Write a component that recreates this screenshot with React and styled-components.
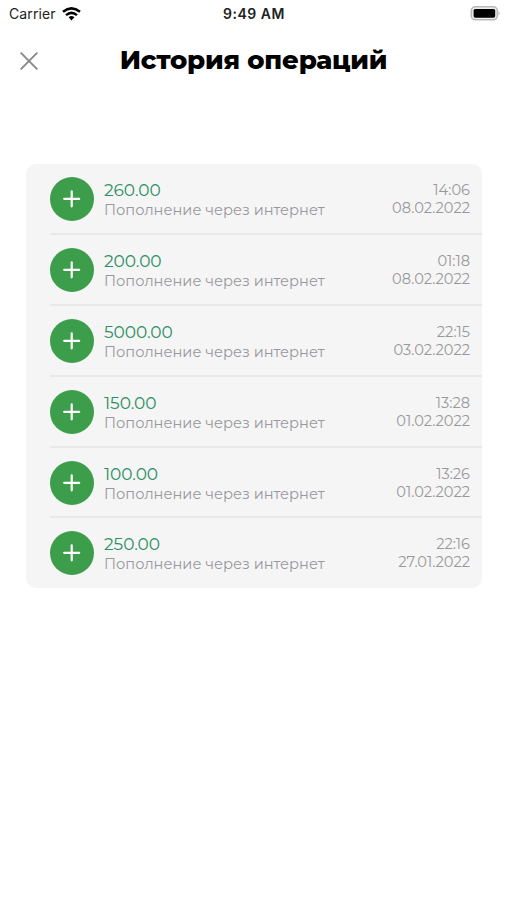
import React from "react";
import styled, { createGlobalStyle } from "styled-components";

const GlobalStyle = createGlobalStyle`
  * { box-sizing: border-box; }
  body { margin: 0; background: #fff; }
`;

const Screen = styled.main`
  width: 507px;
  height: 900px;
  overflow: hidden;
  background: #fff;
  font-family: Montserrat, Inter, sans-serif;
`;

const StatusBar = styled.div`
  display: grid;
  grid-template-columns: 1fr auto 1fr;
  align-items: center;
  height: 27px;
  padding: 0 7px 0 9px;
  color: #222;
  font-family: Inter, sans-serif;
`;

const Carrier = styled.div`
  display: flex;
  align-items: center;
  gap: 6px;
  font-size: 14px;
  line-height: 18px;
  letter-spacing: 0.1px;
`;

const Clock = styled.div`
  font-size: 14px;
  line-height: 18px;
  font-weight: 600;
  letter-spacing: 0.5px;
  margin-right: 1px;
`;

const BatteryIcon = styled.svg`
  justify-self: end;
`;

const Header = styled.header`
  display: grid;
  grid-template-columns: 58px 1fr 58px;
  align-items: center;
  height: 67px;
`;

const CloseButton = styled.button`
  display: flex;
  justify-content: center;
  padding: 0;
  border: 0;
  background: none;
`;

const Title = styled.h1`
  margin: 0 0 1px;
  text-align: center;
  font-size: 26px;
  line-height: 32px;
  font-weight: 800;
  letter-spacing: -0.2px;
  white-space: nowrap;
  color: #000;
`;

const Card = styled.ul`
  list-style: none;
  margin: 70px 25px 0 26px;
  padding: 0 0 0 24px;
  height: 424px;
  border-radius: 10px;
  background: #f5f5f5;
`;

const Row = styled.li`
  display: flex;
  height: 70.9px;
  padding: 13px 12px 0 0;
  border-bottom: 2px solid #e8e9eb;
  &:last-child { border-bottom: 0; height: 69.5px; }
`;

const Badge = styled.div`
  flex: none;
  width: 44px;
  height: 44px;
  border-radius: 50%;
  background: #3c9d4b;
`;

const Details = styled.div`
  flex: 1;
  padding: 3px 0 0 10px;
  white-space: nowrap;
`;

const Amount = styled.div`
  font-size: 17px;
  line-height: 20px;
  letter-spacing: -0.05px;
  color: #2c8f62;
`;

const Description = styled.div`
  font-size: 14.6px;
  line-height: 20px;
  color: #98989d;
`;

const Stamp = styled.div`
  padding-top: 4px;
  text-align: right;
  font-size: 14.6px;
  line-height: 18px;
  color: #98989b;
`;

const StampLine = styled.div`
  white-space: nowrap;
`;

const operations = [
  { amount: "260.00", time: "14:06", date: "08.02.2022" },
  { amount: "200.00", time: "01:18", date: "08.02.2022" },
  { amount: "5000.00", time: "22:15", date: "03.02.2022" },
  { amount: "150.00", time: "13:28", date: "01.02.2022" },
  { amount: "100.00", time: "13:26", date: "01.02.2022" },
  { amount: "250.00", time: "22:16", date: "27.01.2022" },
];

function Operation({ amount, time, date }) {
  return (
    <Row>
      <Badge>
        <svg width="44" height="44" viewBox="0 0 44 44" fill="none" stroke="#fff" strokeWidth="2.2" strokeLinecap="round">
          <path d="M14.2 21.8H29.2M21.7 14.3V29.3" />
        </svg>
      </Badge>
      <Details>
        <Amount>{amount}</Amount>
        <Description>Пополнение через интернет</Description>
      </Details>
      <Stamp>
        <StampLine>{time}</StampLine>
        <StampLine>{date}</StampLine>
      </Stamp>
    </Row>
  );
}

export default function App() {
  return (
    <Screen>
      <GlobalStyle />
      <StatusBar>
        <Carrier>
          <span>Carrier</span>
          <svg width="19" height="14" viewBox="0 0 19 14" fill="none" stroke="#000" strokeWidth="2.5">
            <path d="M1 4.8Q9.5 -2 18 4.8" />
            <path d="M4 8.1Q9.5 3.6 15 8.1" />
            <path d="M6.6 10.2Q9.5 8 12.4 10.2L9.5 13.4Z" fill="#000" stroke="none" />
          </svg>
        </Carrier>
        <Clock>9:49 AM</Clock>
        <BatteryIcon width="30" height="15" viewBox="0 0 30 15">
          <rect x="1.3" y="0.8" width="26" height="13" rx="4" fill="#eee" stroke="#b9b9b9" strokeWidth="1.6" />
          <rect x="3.6" y="2.9" width="21.6" height="8.8" rx="1.6" fill="#000" />
          <path d="M28.6 5.2Q30.6 7.3 28.6 9.4Z" fill="#aaa" />
        </BatteryIcon>
      </StatusBar>
      <Header>
        <CloseButton aria-label="Закрыть">
          <svg width="18" height="18" viewBox="0 0 18 18" fill="none" stroke="#888" strokeWidth="1.9" strokeLinecap="round">
            <path d="M1.2 1.2L16.8 16.8M16.8 1.2L1.2 16.8" />
          </svg>
        </CloseButton>
        <Title>История операций</Title>
      </Header>
      <Card>
        {operations.map((item) => (
          <Operation key={item.date + item.time} {...item} />
        ))}
      </Card>
    </Screen>
  );
}
